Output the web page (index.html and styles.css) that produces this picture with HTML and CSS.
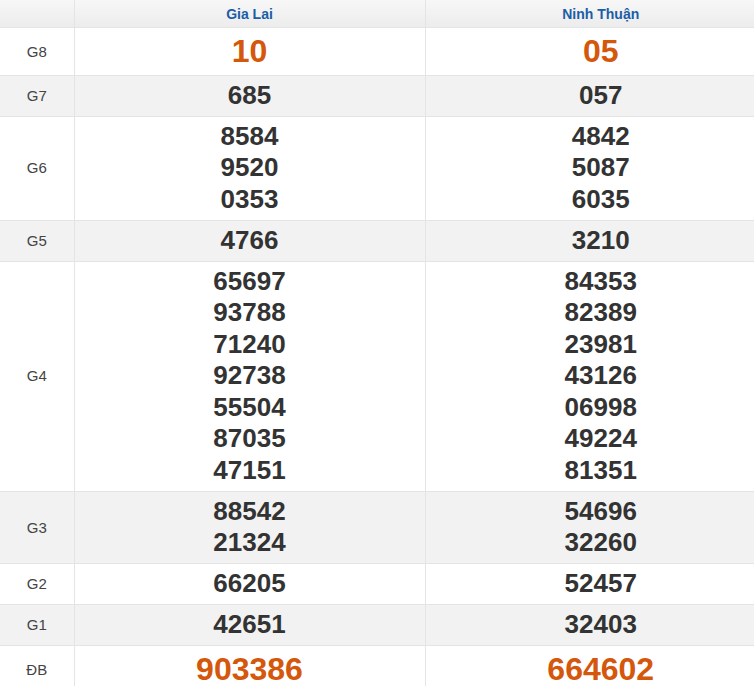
FILE: index.html
```html
<!DOCTYPE html>
<html lang="vi">
<head>
<meta charset="utf-8">
<link rel="stylesheet" href="styles.css">
</head>
<body>
<div class="frame">
<table class="kq">
  <colgroup>
    <col class="c-label">
    <col class="c-a">
    <col class="c-b">
  </colgroup>
  <thead>
    <tr class="head">
      <th></th>
      <th>Gia Lai</th>
      <th>Ninh Thuận</th>
    </tr>
  </thead>
  <tbody>
    <tr class="big">
      <td class="lbl">G8</td>
      <td><div class="n hot">10</div></td>
      <td><div class="n hot">05</div></td>
    </tr>
    <tr class="alt">
      <td class="lbl">G7</td>
      <td><div class="n">685</div></td>
      <td><div class="n">057</div></td>
    </tr>
    <tr>
      <td class="lbl">G6</td>
      <td><div class="n">8584</div><div class="n">9520</div><div class="n">0353</div></td>
      <td><div class="n">4842</div><div class="n">5087</div><div class="n">6035</div></td>
    </tr>
    <tr class="alt">
      <td class="lbl">G5</td>
      <td><div class="n">4766</div></td>
      <td><div class="n">3210</div></td>
    </tr>
    <tr>
      <td class="lbl">G4</td>
      <td><div class="n">65697</div><div class="n">93788</div><div class="n">71240</div><div class="n">92738</div><div class="n">55504</div><div class="n">87035</div><div class="n">47151</div></td>
      <td><div class="n">84353</div><div class="n">82389</div><div class="n">23981</div><div class="n">43126</div><div class="n">06998</div><div class="n">49224</div><div class="n">81351</div></td>
    </tr>
    <tr class="alt">
      <td class="lbl">G3</td>
      <td><div class="n">88542</div><div class="n">21324</div></td>
      <td><div class="n">54696</div><div class="n">32260</div></td>
    </tr>
    <tr>
      <td class="lbl">G2</td>
      <td><div class="n">66205</div></td>
      <td><div class="n">52457</div></td>
    </tr>
    <tr class="alt">
      <td class="lbl">G1</td>
      <td><div class="n">42651</div></td>
      <td><div class="n">32403</div></td>
    </tr>
    <tr class="big">
      <td class="lbl">ĐB</td>
      <td><div class="n hot">903386</div></td>
      <td><div class="n hot">664602</div></td>
    </tr>
  </tbody>
</table>
</div>
</body>
</html>
```

FILE: styles.css
```css
html, body {
  margin: 0;
  padding: 0;
  background: #ffffff;
}
body {
  font-family: "Liberation Sans", Arial, sans-serif;
  color: #333333;
}
.frame {
  width: 754px;
  overflow: hidden;
}
.kq {
  width: 776px;
  border-collapse: collapse;
  table-layout: fixed;
}
.c-label { width: 74px; }
.c-a { width: 351px; }
.c-b { width: 351px; }

.kq th,
.kq td {
  border: 1px solid #e4e4e4;
  text-align: center;
  vertical-align: middle;
}
.kq tr > :first-child { border-left: none; }
.kq tr > :last-child { border-right: none; }
.kq thead th { border-top: none; }

.head th {
  height: 27px;
  padding: 0;
  font-size: 14px;
  font-weight: bold;
  color: #1b5ea6;
  background: linear-gradient(#f7f7f7, #ececec);
}
.kq td {
  padding: 4px 0 4.5px;
}
.alt td { background: #f2f2f2; }

.lbl {
  font-size: 15px;
  color: #444444;
}
.n {
  font-size: 26px;
  font-weight: bold;
  line-height: 31.5px;
  color: #333333;
}
.big .n {
  font-size: 32px;
  line-height: 38px;
}
.hot { color: #d4570c; }
```
